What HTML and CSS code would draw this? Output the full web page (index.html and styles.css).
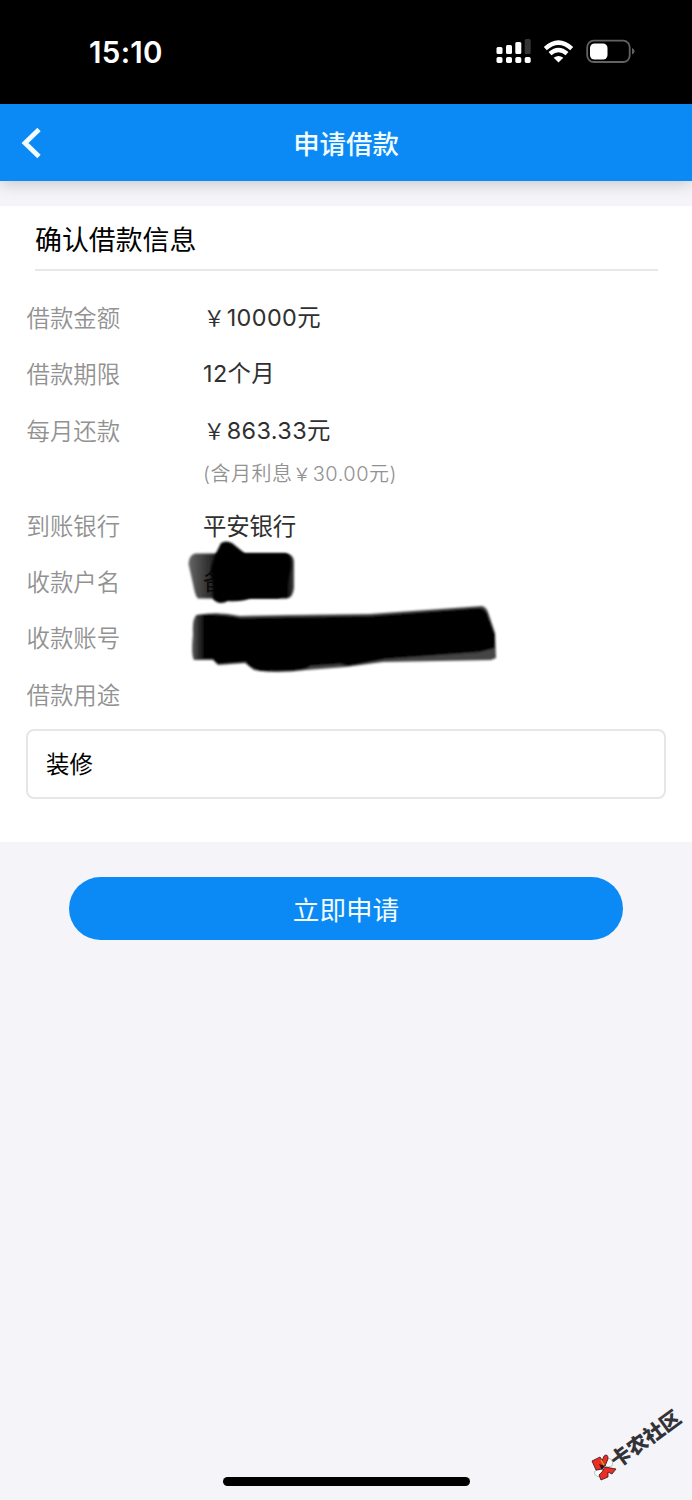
FILE: index.html
```html
<!DOCTYPE html>
<html lang="zh-CN">
<head>
<meta charset="utf-8">
<title>申请借款</title>
<link rel="stylesheet" href="styles.css">
</head>
<body>
<div class="screen">
  <div class="status">
    <span class="time">15:10</span>
    <svg class="status-icons" width="142" height="30" viewBox="0 0 142 30">
      <g fill="#fff">
        <rect x="0.5" y="10" width="6" height="7" rx="1.5"/>
        <rect x="10" y="8" width="6" height="9" rx="1.5"/>
        <rect x="19.3" y="5" width="6" height="12" rx="1.5"/>
        <rect x="28.7" y="2" width="6" height="15" rx="1.5" fill="#353535"/>
        <rect x="0.5" y="20" width="6" height="6" rx="1.7"/>
        <rect x="10" y="20" width="6" height="6" rx="1.7"/>
        <rect x="19.3" y="20" width="6" height="6" rx="1.7"/>
        <rect x="28.7" y="20" width="6" height="6" rx="1.7"/>
        <path d="M62.500 25.500L57.700 20.800Q62.500 17.200 67.300 20.800Z"/>
      </g>
      <g fill="none" stroke="#fff" stroke-width="4.400">
        <path d="M49.300 11.600Q62.500 -0.400 75.700 11.600"/>
        <path d="M54 16.700Q62.500 9.300 71 16.700"/>
      </g>
      <rect x="91.200" y="3.700" width="42.500" height="21.300" rx="6.500" fill="none" stroke="#626262" stroke-width="1.800"/>
      <rect x="94" y="6.500" width="17.500" height="16" rx="4.500" fill="#fff"/>
      <path d="M136 11q2.500 .8 2.500 3.300t-2.500 3.300z" fill="#626262"/>
    </svg>
  </div>
  <header class="nav">
    <svg class="back" width="22" height="34" viewBox="0 0 22 34"><path d="M18 3.500L4 17L18 30.500" fill="none" stroke="#f2fcff" stroke-width="4.800"/></svg>
    <h1 class="nav-title">申请借款</h1>
  </header>
  <main class="card">
    <h2 class="card-title">确认借款信息</h2>
    <div class="rows">
      <div class="row"><span class="label">借款金额</span><span class="value"><span class="yen">￥</span>10000元</span></div>
      <div class="row"><span class="label">借款期限</span><span class="value">12个月</span></div>
      <div class="row"><span class="label">每月还款</span><span class="value"><span class="yen">￥</span>863.33元</span></div>
      <div class="note">(含月利息<span class="yen">￥</span>30.00元)</div>
      <div class="row"><span class="label">到账银行</span><span class="value bank">平安银行</span></div>
      <div class="row"><span class="label">收款户名</span></div>
      <div class="row"><span class="label">收款账号</span></div>
      <div class="row"><span class="label">借款用途</span></div>
    </div>
    <div class="field">装修</div>
    <svg class="scribble" width="330" height="150" viewBox="0 0 330 150">
      <defs>
        <filter id="soft"><feGaussianBlur stdDeviation="1"/></filter>
        <linearGradient id="fade"><stop offset="0" stop-color="#666"/><stop offset=".24" stop-color="#222"/><stop offset=".4"/><stop offset=".93"/><stop offset="1" stop-color="#444"/></linearGradient>
        <linearGradient id="ends"><stop offset="0" stop-color="#555"/><stop offset=".04" stop-color="#000"/><stop offset="1" stop-color="#000"/></linearGradient>
      </defs>
      <path filter="url(#soft)" d="M15 23.500H106Q113 24 114 31V58Q113 68 106 68.500H18Q15 66 13 54L8.500 34Q9 25 15 23.500Z" fill="url(#fade)"/>
      <text class="covered-name" x="23" y="60">备</text>
      <g filter="url(#soft)">
        <path d="M35 25L41 13Q46 10 52 13L65 23.500H106Q112 26 111 38L106 58Q103 67 98 68H70Q62 72 48 71Q39 76 33 69V55L31 38Z"/>
        <path d="M17 85Q38 81 60 86L110 85L190 84L302 76Q307 77 309 85L315 103L316 128L311 130L203 132L165 137L126 140Q96 144 74 140L65 133L38 135L33 130L14 130Q11 125 13 104Q12 88 17 85Z" fill="#444"/>
        <path d="M16 85Q40 83 61 88L190 86L298 78Q306 78 308 86L315 105V118L300 122L205 129L168 136L160 134L130 136Q126 142 82 141Q70 139 66 132L38 134L33 129L15 129L13 110Z" fill="url(#ends)"/>
      </g>
    </svg>
  </main>
  <button class="apply">立即申请</button>
  <div class="home"></div>
  <div class="watermark">
    <svg width="28" height="28" viewBox="0 0 28 28">
      <path d="M18 5Q24 6 22 13L17 14L15 12ZM5 18L12 16L14 19L10 24Q3 23 5 18Z" fill="#fff" stroke="#7aaaae" stroke-width=".6"/>
      <g stroke="#351516" stroke-width=".8" fill="#ed2c25">
        <path d="M2 8L10 4L14 10L12 16L6 17Z"/>
        <path d="M12 8L14 3Q18 0 18 6L15 13Z"/>
        <path d="M12 19L15 14L26 16L22 21L18 19L18 24L11 27L9 22Z"/>
      </g>
      <path d="M9 11L15 13L12 17Z" fill="#301012"/><path d="M11 7L14 12" stroke="#e4ac20" stroke-width="1.400"/>
    </svg>
    <span class="watermark-text">卡农社区</span>
  </div>
</div>
</body>
</html>
```
FILE: styles.css
```css
* { box-sizing: border-box; }
body { margin: 0; }
.screen {
  position: relative;
  width: 692px;
  height: 1500px;
  overflow: hidden;
  display: flex;
  flex-direction: column;
  background: #f4f4f9;
  font-family: Inter, "Noto Sans CJK SC", sans-serif;
  font-size: 23.4px;
}
.status {
  height: 104px;
  flex: none;
  background: #000;
  color: #fff;
  display: flex;
  justify-content: space-between;
  align-items: center;
  padding: 0 54px 0 89px;
}
.time { font-size: 29.5px; font-weight: 600; letter-spacing: .3px; }
.nav {
  height: 77px;
  flex: none;
  background: #0b8af5;
  box-shadow: 0 2px 16px rgba(0, 0, 0, .2);
  display: grid;
  grid-template-columns: 72px 1fr 72px;
  align-items: center;
}
.back { margin-left: 21px; }
.nav-title {
  margin: 0;
  color: #f2fcff;
  text-align: center;
  font-size: 26.4px;
  line-height: 40px;
  font-weight: 500;
  padding-top: 2px;
}
.card {
  position: relative;
  height: 636px;
  flex: none;
  margin-top: 25px;
  padding: 0 26px;
  background: #fff;
}
.card-title {
  height: 65px;
  margin: 0 8px 19px 9px;
  border-bottom: 2px solid #e8e8e9;
  line-height: 68px;
  font-size: 26.9px;
  font-weight: 400;
  color: #000;
}
.row {
  display: grid;
  grid-template-columns: 177px 1fr;
  height: 56.3px;
  line-height: 57px;
}
.label { color: #929292; padding-left: .5px; font-weight: 350; }
.value { color: #303030; letter-spacing: .4px; line-height: 55.5px; white-space: nowrap; }
.bank { letter-spacing: -.1px; line-height: 57px; }
.yen {
  display: inline-block;
  width: 1.1em;
  font-size: .92em;
  line-height: 1;
  text-align: center;
  text-indent: -1px;
}
.note {
  margin: 0 0 7px 177px;
  height: 32px;
  line-height: 31px;
  font-size: 20px;
  font-weight: 350;
  letter-spacing: .5px;
  color: #929292;
}
.field {
  height: 70px;
  margin-top: 6px;
  padding-left: 18px;
  border: 2px solid #e6e6e8;
  border-radius: 8px;
  line-height: 68px;
  color: #000;
}
.scribble { position: absolute; left: 180px; top: 324px; }
.covered-name { font-size: 23.4px; fill: #0b0b0b; }
.apply {
  flex: none;
  width: 554px;
  height: 63px;
  margin: 35px auto 0;
  padding: 0;
  border: 0;
  border-radius: 32px;
  background: #0b8af5;
  color: #f2fcff;
  font: 26.6px Inter, "Noto Sans CJK SC", sans-serif;
}
.home {
  width: 247px;
  height: 9px;
  margin: auto auto 14px;
  border-radius: 5px;
  background: #000;
}
.watermark { position: absolute; left: 590px; top: 1453px; display: flex; }
.watermark-text {
  position: absolute;
  left: 23px;
  top: -2px;
  font-size: 20.3px;
  line-height: 24px;
  font-weight: 900;
  color: #333337;
  white-space: nowrap;
  transform: rotate(-36deg);
  transform-origin: 0 50%;
}
```
